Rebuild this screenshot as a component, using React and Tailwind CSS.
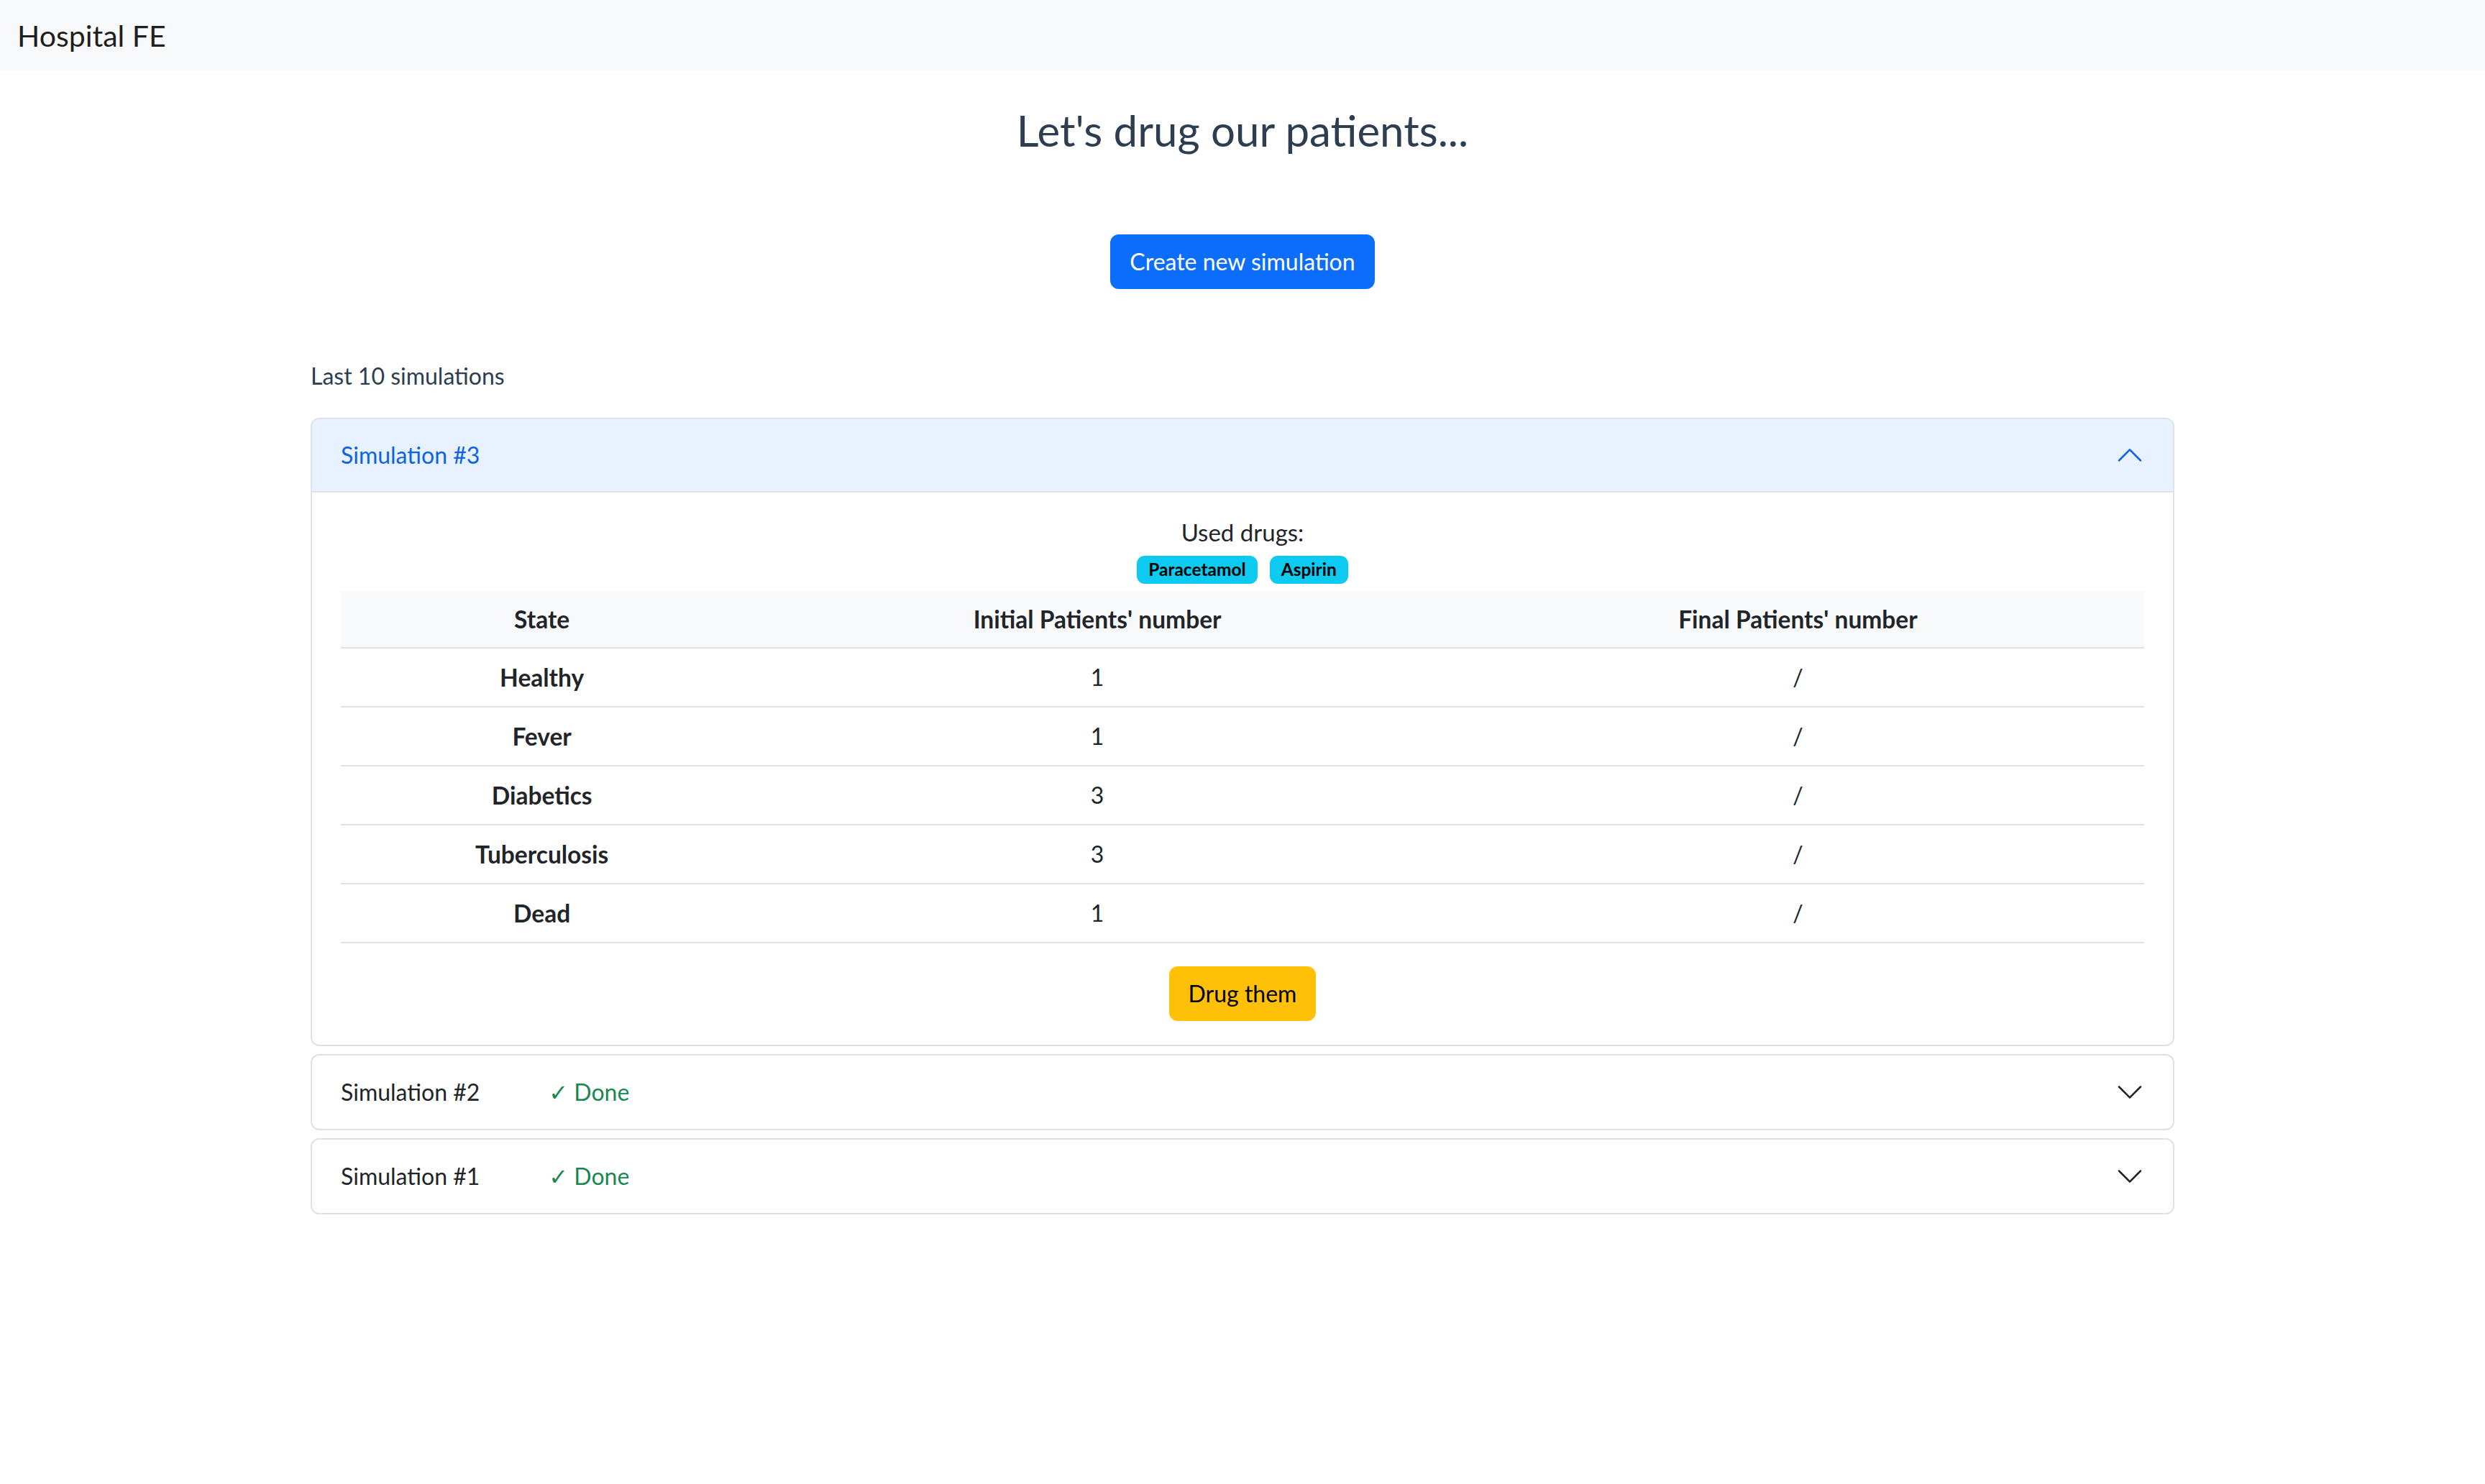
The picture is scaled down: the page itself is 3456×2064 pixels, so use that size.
import React from "react";

function Chevron({ up, color }) {
  return (
    <svg
      width="40"
      height="40"
      viewBox="0 0 16 16"
      fill={color}
      className={up ? "rotate-180" : ""}
    >
      <path
        fillRule="evenodd"
        d="M1.646 4.646a.5.5 0 0 1 .708 0L8 10.293l5.646-5.647a.5.5 0 0 1 .708.708l-6 6a.5.5 0 0 1-.708 0l-6-6a.5.5 0 0 1 0-.708z"
      />
    </svg>
  );
}

const rows = [
  ["Healthy", "1", "/"],
  ["Fever", "1", "/"],
  ["Diabetics", "3", "/"],
  ["Tuberculosis", "3", "/"],
  ["Dead", "1", "/"],
];

function DoneItem({ n }) {
  return (
    <div className="mt-[11px] border-2 border-[#dee2e6] rounded-[12px] bg-white">
      <div className="h-[102px] px-[40px] flex items-center justify-between text-[#212529]">
        <div className="flex items-center leading-[48px]">
          <span>Simulation #{n}</span>
          <span className="ml-[96px] text-[#198754]">
            <span className="font-['DejaVu_Sans',sans-serif] text-[32px]">✓</span> Done
          </span>
        </div>
        <Chevron color="#212529" />
      </div>
    </div>
  );
}

export default function App() {
  return (
    <div className="min-h-screen bg-white font-['Lato',sans-serif] text-[32px]">
      <nav className="h-[99px] bg-[#f8f9fa] flex items-center px-[24px]">
        <span className="text-[41px] leading-[60px] text-[rgba(0,0,0,0.9)]">
          Hospital FE
        </span>
      </nav>
      <div className="w-[2592px] mx-auto text-[#2c3e50]">
        <h2 className="text-center text-[60px] leading-[72px] mt-[46px] font-normal">
          Let's drug our patients...
        </h2>
        <div className="flex justify-center mt-[109px]">
          <button className="h-[76px] px-[27px] rounded-[12px] bg-[#0d6efd] text-white leading-[48px]">
            Create new simulation
          </button>
        </div>
        <div className="mt-[97px] leading-[48px]">Last 10 simulations</div>
        <div className="mt-[34px] border-2 border-[#dee2e6] rounded-[12px] overflow-hidden">
          <div className="h-[102px] px-[40px] flex items-center justify-between bg-[#e7f1ff] text-[#0c63e4] border-b-2 border-[#dee2e6]">
            <span className="leading-[48px]">Simulation #3</span>
            <Chevron up color="#0c63e4" />
          </div>
          <div className="px-[40px] pt-[31px] pb-[33px] text-center text-[#212529]">
            <div className="leading-[48px] text-[33px]">Used drugs:</div>
            <div className="flex justify-center gap-[17px] mt-[9px]">
              <span className="h-[39px] px-[16px] flex items-center rounded-[11px] bg-[#0dcaf0] text-black text-[24.5px] font-bold">
                Paracetamol
              </span>
              <span className="h-[39px] px-[16px] flex items-center rounded-[11px] bg-[#0dcaf0] text-black text-[24.5px] font-bold">
                Aspirin
              </span>
            </div>
            <table className="w-full mt-[10px] border-collapse text-[#212529]">
              <thead>
                <tr className="bg-[#f8f9fa] border-b-2 border-[#dee2e6]">
                  <th className="w-[22.3%] h-[79px] font-bold text-[33.5px] leading-[48px]">State</th>
                  <th className="w-[39.3%] h-[79px] font-bold text-[33.5px] leading-[48px]">Initial Patients' number</th>
                  <th className="h-[79px] font-bold text-[33.5px] leading-[48px]">Final Patients' number</th>
                </tr>
              </thead>
              <tbody>
                {rows.map((r) => (
                  <tr key={r[0]} className="border-b-2 border-[#dee2e6]">
                    <th className="h-[82px] font-bold text-[33.5px] leading-[48px]">{r[0]}</th>
                    <td className="h-[82px] leading-[48px]">{r[1]}</td>
                    <td className="h-[82px] leading-[48px]">{r[2]}</td>
                  </tr>
                ))}
              </tbody>
            </table>
            <div className="flex justify-center mt-[32px]">
              <button className="h-[76px] px-[27px] rounded-[12px] bg-[#ffc107] text-black leading-[48px]">
                Drug them
              </button>
            </div>
          </div>
        </div>
        <DoneItem n={2} />
        <DoneItem n={1} />
      </div>
    </div>
  );
}
